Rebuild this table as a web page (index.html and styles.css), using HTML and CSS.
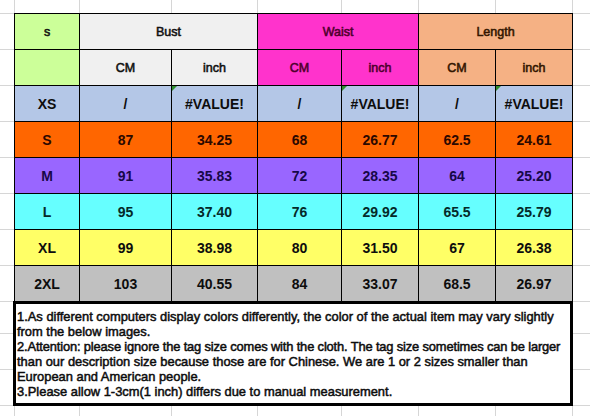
FILE: index.html
```html
<!DOCTYPE html>
<html lang="en">
<head>
  <meta charset="UTF-8">
  <title>Size Chart</title>
  <link rel="stylesheet" href="styles.css">
</head>
<body>
  <div class="sheet">
    <table class="size-chart">
      <colgroup>
        <col class="c-size">
        <col class="c-bust-cm">
        <col class="c-bust-in">
        <col class="c-waist-cm">
        <col class="c-waist-in">
        <col class="c-len-cm">
        <col class="c-len-in">
      </colgroup>
      <tr class="head">
        <td class="h-size">s</td>
        <td class="h-bust" colspan="2">Bust</td>
        <td class="h-waist" colspan="2">Waist</td>
        <td class="h-length" colspan="2">Length</td>
      </tr>
      <tr class="head">
        <td class="h-size"></td>
        <td class="h-bust">CM</td>
        <td class="h-bust">inch</td>
        <td class="h-waist">CM</td>
        <td class="h-waist">inch</td>
        <td class="h-length">CM</td>
        <td class="h-length">inch</td>
      </tr>
      <tr class="row-xs">
        <td>XS</td><td>/</td><td class="err">#VALUE!</td><td>/</td><td class="err">#VALUE!</td><td>/</td><td class="err">#VALUE!</td>
      </tr>
      <tr class="row-s">
        <td>S</td><td>87</td><td>34.25</td><td>68</td><td>26.77</td><td>62.5</td><td>24.61</td>
      </tr>
      <tr class="row-m">
        <td>M</td><td>91</td><td>35.83</td><td>72</td><td>28.35</td><td>64</td><td>25.20</td>
      </tr>
      <tr class="row-l">
        <td>L</td><td>95</td><td>37.40</td><td>76</td><td>29.92</td><td>65.5</td><td>25.79</td>
      </tr>
      <tr class="row-xl">
        <td>XL</td><td>99</td><td>38.98</td><td>80</td><td>31.50</td><td>67</td><td>26.38</td>
      </tr>
      <tr class="row-2xl">
        <td>2XL</td><td>103</td><td>40.55</td><td>84</td><td>33.07</td><td>68.5</td><td>26.97</td>
      </tr>
    </table>

    <div class="notes">
      <div class="line">1.As different computers display colors differently, the color of the actual item may vary slightly</div>
      <div class="line">from the below images.</div>
      <div class="line tight">2.Attention: please ignore the tag size comes with the cloth. The tag size sometimes can be larger</div>
      <div class="line">than our description size because those are for Chinese. We are 1 or 2 sizes smaller than</div>
      <div class="line">European and American people.</div>
      <div class="line">3.Please allow 1-3cm(1 inch) differs due to manual measurement.</div>
    </div>
  </div>
</body>
</html>
```

FILE: styles.css
```css
html, body { margin: 0; padding: 0; background: #fff; }
body { font-family: "Liberation Sans", Arial, sans-serif; color: #111; }

/* spreadsheet gridlines behind the chart */
.sheet {
  width: 590px; height: 416px; box-sizing: border-box; overflow: hidden;
  padding: 13px 0 0 14px;
  --g: linear-gradient(#d6d6d6, #d6d6d6);
  background-color: #fff;
  background-image:
    var(--g), var(--g), var(--g), var(--g), var(--g), var(--g), var(--g), var(--g),
    var(--g), var(--g), var(--g), var(--g), var(--g), var(--g), var(--g), var(--g),
    var(--g), var(--g), var(--g), var(--g);
  background-repeat: no-repeat;
  background-size:
    1px 100%, 1px 100%, 1px 100%, 1px 100%, 1px 100%, 1px 100%, 1px 100%, 1px 100%,
    100% 1px, 100% 1px, 100% 1px, 100% 1px, 100% 1px, 100% 1px, 100% 1px, 100% 1px,
    100% 1px, 100% 1px, 100% 1px, 100% 1px;
  background-position:
    14px 0, 79px 0, 171px 0, 257px 0, 341px 0, 418px 0, 495px 0, 572px 0,
    0 13px, 0 49px, 0 85px, 0 121px, 0 157px, 0 193px, 0 229px, 0 265px,
    0 301px, 0 333px, 0 369px, 0 405px;
}

.size-chart { border-collapse: collapse; table-layout: fixed; width: 559px; }
.size-chart td {
  border: 1px solid #000; height: 35px; padding: 0;
  text-align: center; vertical-align: middle;
  font-size: 14px; font-weight: bold; white-space: nowrap;
}
.c-size { width: 65px; }
.c-bust-cm { width: 92px; }
.c-bust-in { width: 86px; }
.c-waist-cm { width: 84px; }
.c-waist-in, .c-len-cm, .c-len-in { width: 77px; }

.size-chart .head td { font-size: 12.5px; font-weight: normal; -webkit-text-stroke: 0.55px currentColor; }
.h-size { background: #ccff99; color: #111; }
.h-bust { background: #f0f0f0; color: #111; }
.h-waist { background: #ff33cc; color: #4f002c; }
.h-length { background: #f5b184; color: #331600; }

.row-xs td { background: #b4c7e7; color: #0d0d0d; }
.row-s td { background: #ff6600; color: #2b0800; }
.row-m td { background: #9966ff; color: #170848; }
.row-l td { background: #66ffff; color: #042a29; }
.row-xl td { background: #ffff66; color: #0d0d0d; }
.row-2xl td { background: #c0c0c0; color: #0d0d0d; }

/* excel error marker */
.size-chart td.err { position: relative; }
.err::before {
  content: ""; position: absolute; left: 0; top: 0;
  border-top: 5px solid #2f8f2f; border-right: 5px solid transparent;
}

.notes {
  box-sizing: border-box; width: 560px; height: 105px;
  margin: -1px 0 0 -1px; padding: 5px 0 0 1px;
  border: 3px solid #000; background: #fff;
  font-size: 12.9px; line-height: 15px; color: #0d0d0d;
  -webkit-text-stroke: 0.5px currentColor;
}
.notes .line { white-space: nowrap; }
.notes .tight { letter-spacing: -0.15px; }
```
